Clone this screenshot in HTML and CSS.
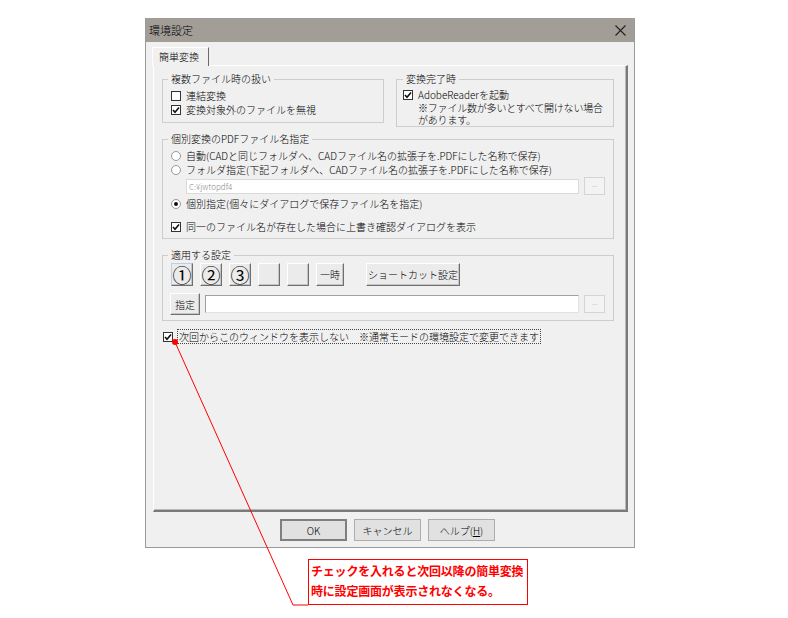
FILE: index.html
```html
<!DOCTYPE html>
<html>
<head>
  <meta charset="UTF-8">
  <title>環境設定</title>
  <link rel="stylesheet" href="styles.css">
</head>
<body>
  <div class="dialog">
    <div class="title-bar">
      <span>環境設定</span>
      <svg class="close" width="11" height="11" viewBox="0 0 11 11"><path d="M0.5 0.5 L10.5 10.5 M10.5 0.5 L0.5 10.5" stroke="#222" stroke-width="1.1" fill="none"/></svg>
    </div>

    <div class="dialog-body">
      <div class="tab">簡単変換</div>
      <div class="tab-panel">

        <!-- upper groups -->
        <div class="row-groups">
          <fieldset class="group group-multi">
            <legend>複数ファイル時の扱い</legend>
            <div class="check-row"><span class="check"></span>連結変換</div>
            <div class="check-row"><span class="check on"><svg width="8" height="8" viewBox="0 0 8 8"><path d="M1 4 L3 6.3 L7 1.5" stroke="#111" stroke-width="1.6" fill="none"/></svg></span>変換対象外のファイルを無視</div>
          </fieldset>
          <fieldset class="group group-done">
            <legend>変換完了時</legend>
            <div class="check-row"><span class="check on"><svg width="8" height="8" viewBox="0 0 8 8"><path d="M1 4 L3 6.3 L7 1.5" stroke="#111" stroke-width="1.6" fill="none"/></svg></span>AdobeReaderを起動</div>
            <div class="note-text">※ファイル数が多いとすべて開けない場合<br>があります。</div>
          </fieldset>
        </div>

        <!-- PDF file name -->
        <fieldset class="group group-pdf">
          <legend>個別変換のPDFファイル名指定</legend>
          <div class="check-row"><span class="radio"></span>自動(CADと同じフォルダへ、CADファイル名の拡張子を.PDFにした名称で保存)</div>
          <div class="check-row"><span class="radio"></span>フォルダ指定(下記フォルダへ、CADファイル名の拡張子を.PDFにした名称で保存)</div>
          <div class="path-row">
            <div class="text-box disabled">C:¥jwtopdf4</div>
            <div class="dots-btn">...</div>
          </div>
          <div class="check-row gap-top"><span class="radio on"></span>個別指定(個々にダイアログで保存ファイル名を指定)</div>
          <div class="check-row gap-top-lg"><span class="check on"><svg width="8" height="8" viewBox="0 0 8 8"><path d="M1 4 L3 6.3 L7 1.5" stroke="#111" stroke-width="1.6" fill="none"/></svg></span>同一のファイル名が存在した場合に上書き確認ダイアログを表示</div>
        </fieldset>

        <!-- settings -->
        <fieldset class="group group-apply">
          <legend>適用する設定</legend>
          <div class="preset-row">
            <div class="bevel num active">①</div>
            <div class="bevel num">②</div>
            <div class="bevel num">③</div>
            <div class="bevel num"></div>
            <div class="bevel num"></div>
            <div class="bevel small-btn">一時</div>
            <div class="bevel shortcut-btn">ショートカット設定</div>
          </div>
          <div class="path-row second">
            <div class="bevel spec-btn">指定</div>
            <div class="text-box"></div>
            <div class="dots-btn">...</div>
          </div>
        </fieldset>

        <div class="check-row bottom-check">
          <span class="check on"><svg width="8" height="8" viewBox="0 0 8 8"><path d="M1 4 L3 6.3 L7 1.5" stroke="#111" stroke-width="1.6" fill="none"/></svg></span>
          <span class="focus-label">次回からこのウィンドウを表示しない　※通常モードの環境設定で変更できます</span>
        </div>
      </div>

      <div class="footer">
        <button class="btn default">OK</button>
        <button class="btn">キャンセル</button>
        <button class="btn">ヘルプ(<u>H</u>)</button>
      </div>
    </div>
  </div>

  <div class="callout">チェックを入れると次回以降の簡単変換<br>時に設定画面が表示されなくなる。</div>

  <!-- leader line of the callout -->
  <svg class="leader" width="788" height="618" viewBox="0 0 788 618">
    <polyline points="175,342 293,605 308,605" stroke="#f00" stroke-width="1" fill="none"/>
    <circle cx="175" cy="342" r="3" fill="#f00"/>
  </svg>
</body>
</html>
```

FILE: styles.css
```css
/* Global */
* {
  box-sizing: border-box;
}
body {
  margin: 0;
  background: #fff;
  font-family: "Noto Sans CJK JP", "Noto Sans", sans-serif;
  font-size: 10px;
  font-weight: 300;
  color: #000;
  position: relative;
  width: 788px;
  height: 618px;
  overflow: hidden;
}
/* Dialog window */
.dialog {
  margin: 18px 0 0 145px;
  width: 490px;
  height: 530px;
  background: #f0f0f0;
  border: 1px solid #9a9a9a;
  border-top-color: #a29d97;
}
.title-bar {
  height: 23px;
  background: #a29d97;
  display: flex;
  align-items: center;
  justify-content: space-between;
  padding: 0 8px 0 3px;
  font-size: 11px;
  line-height: 23px;
}
.close {
  display: block;
}
.dialog-body {
  padding-top: 5px;
}
/* Tab */
.tab {
  position: relative;
  z-index: 1;
  display: inline-block;
  margin-left: 6px;
  margin-bottom: -1px;
  height: 19px;
  padding: 0 9px 0 6px;
  line-height: 18px;
  background: #f0f0f0;
  border: 1px solid #fff;
  border-right: 1px solid #6a6a6a;
  border-bottom: none;
}
.tab-panel {
  margin-left: 7px;
  width: 475px;
  height: 447px;
  padding: 6px 12px 0 8px;
  border: 1px solid #fff;
  border-right: 2px solid #7a7a7a;
  border-bottom: 2px solid #7a7a7a;
  box-shadow: inset -1px -1px 0 #b8b8b8;
}
/* Group boxes */
.group {
  margin: 0;
  min-width: 0;
  border: 1px solid #cdcdcd;
  padding: 3px 8px 5px 8px;
}
.group legend {
  margin-left: -3px;
  padding: 0 3px;
  line-height: 14px;
}
.row-groups {
  display: flex;
  align-items: flex-start;
  gap: 12px;
}
.group-multi {
  width: 222px;
  padding-bottom: 5px;
}
.group-done {
  width: 218px;
  padding: 2px 0 0 6px;
}
.group-done legend {
  margin-left: 0;
}
.note-text {
  padding-left: 15px;
  line-height: 12px;
  white-space: nowrap;
  letter-spacing: -0.2px;
}
.group-pdf {
  margin-top: 5px;
  padding-bottom: 4px;
}
.group-apply {
  margin-top: 9px;
  padding-top: 1px;
  padding-bottom: 5px;
}
/* Checkboxes and radios */
.check-row {
  display: flex;
  align-items: center;
  gap: 5px;
  height: 14px;
  line-height: 14px;
  white-space: nowrap;
}
.check {
  width: 10px;
  height: 10px;
  flex: none;
  background: #fff;
  border: 1px solid #333;
  display: flex;
  align-items: center;
  justify-content: center;
}
.radio {
  width: 10px;
  height: 10px;
  flex: none;
  background: #fff;
  border: 1px solid #9a9a9a;
  border-radius: 50%;
  display: flex;
  align-items: center;
  justify-content: center;
}
.radio.on::after {
  content: "";
  width: 4px;
  height: 4px;
  border-radius: 50%;
  background: #111;
}
.gap-top {
  margin-top: 2px;
}
.gap-top-lg {
  margin-top: 9px;
}
/* Path inputs */
.path-row {
  display: flex;
  align-items: center;
  gap: 5px;
  height: 18px;
  padding-left: 15px;
}
.path-row.second {
  margin-top: 7px;
  height: 22px;
  padding-left: 0;
  margin-left: -1px;
}
.text-box {
  width: 398px;
  height: 15px;
  background: #fff;
  border: 1px solid #dadada;
  font-size: 8px;
  line-height: 13px;
  color: #8a8a8a;
  padding-left: 2px;
}
.path-row.second .text-box {
  width: 380px;
  height: 18px;
  border-color: #a0a0a0 #e3e3e3 #e3e3e3 #a0a0a0;
}
.dots-btn {
  width: 21px;
  height: 18px;
  flex: none;
  background: #f3f3f3;
  border: 1px solid #d4d4d4;
  color: #a8a8a8;
  font-size: 7px;
  line-height: 12px;
  text-align: center;
}
/* Raised buttons */
.bevel {
  height: 23px;
  flex: none;
  background: #ebebeb;
  border: 1px solid;
  border-color: #fff #6f6f6f #6f6f6f #fff;
  box-shadow: inset -1px -1px 0 #c5c5c5;
  display: flex;
  align-items: center;
  justify-content: center;
}
.preset-row {
  display: flex;
  gap: 7px;
}
.num {
  width: 22px;
  font-size: 19px;
  font-weight: 400;
  line-height: 1;
}
.num.active {
  border-color: #b8d0ea #6f6f6f #6f6f6f #b8d0ea;
}
.small-btn {
  width: 28px;
}
.shortcut-btn {
  width: 94px;
  margin-left: 15px;
}
.spec-btn {
  width: 30px;
  height: 22px;
}
/* Bottom checkbox */
.bottom-check {
  margin-top: 8px;
  margin-left: 1px;
  height: 15px;
  gap: 4px;
}
.focus-label {
  border: 1px dotted #444;
  padding: 0 1px;
  line-height: 13px;
}
/* Footer buttons */
.footer {
  display: flex;
  gap: 7px;
  margin-top: 7px;
  padding-left: 134px;
}
.btn {
  width: 67px;
  height: 22px;
  padding: 0;
  font-family: inherit;
  font-size: 10px;
  font-weight: 300;
  background: #e1e1e1;
  border: 1px solid #adadad;
  color: #000;
}
.btn.default {
  border: 2px solid #7f7f7f;
}
/* Callout */
.callout {
  margin: 11px 0 0 308px;
  width: 220px;
  height: 46px;
  border: 1px solid #f00;
  padding: 1px 0 0 2px;
  color: #f00;
  font-weight: bold;
  font-size: 12px;
  line-height: 20px;
  letter-spacing: -0.2px;
  white-space: nowrap;
}
.leader {
  position: absolute;
  left: 0;
  top: 0;
  pointer-events: none;
}
```
